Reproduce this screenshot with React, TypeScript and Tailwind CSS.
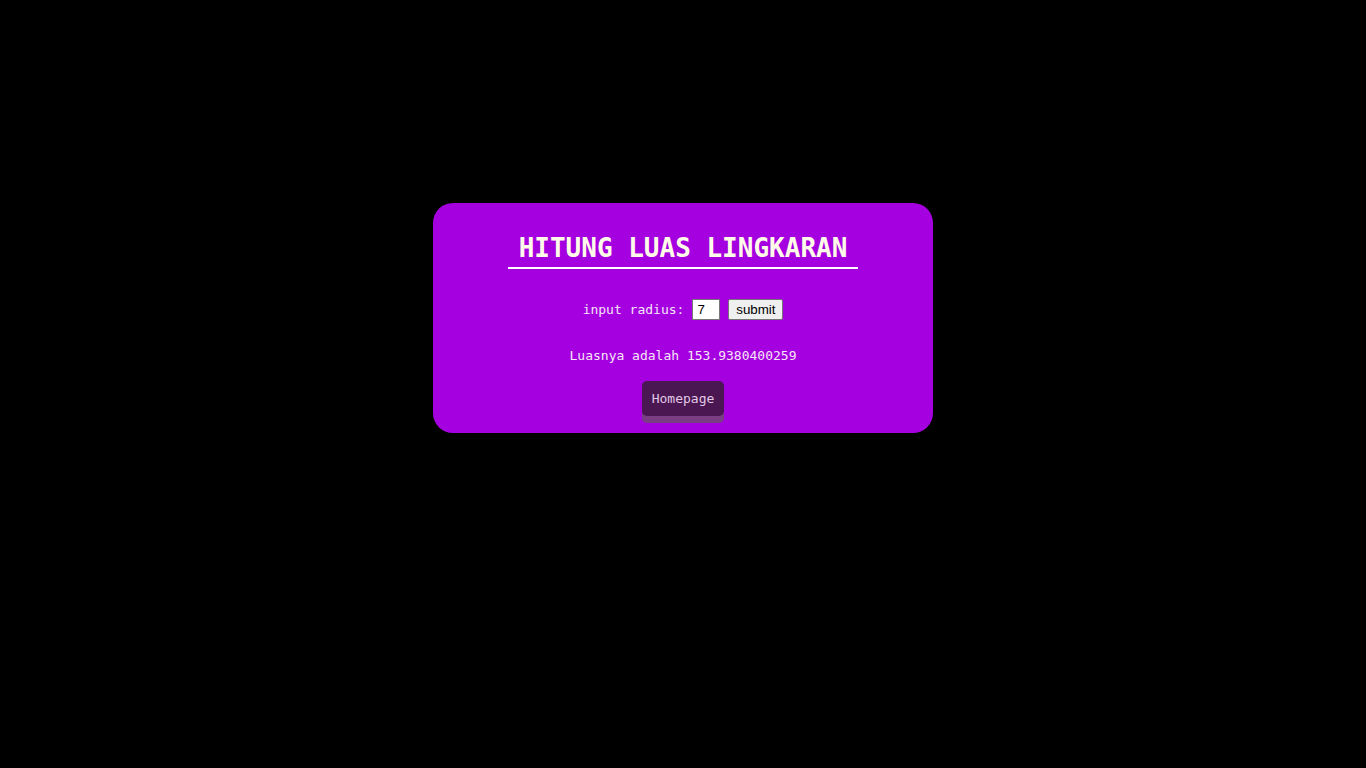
import React from "react";

export default function App() {
  return (
    <div className="min-h-[768px] w-full bg-black pt-[203px]" style={{ fontFamily: '"DejaVu Sans Mono", monospace' }}>
      <div className="mx-auto flex w-[500px] flex-col items-center rounded-[20px] bg-[#a500e0] pt-[30px] pb-[17px]">
        <h1 className="border-b-2 border-white px-[11px] pb-[4px] text-[26px] font-bold leading-[30px] text-[#fffbe8]">
          HITUNG LUAS LINGKARAN
        </h1>
        <div className="mt-[30px] flex items-center text-[13px] text-[#f6e6f6]">
          <span>input radius:</span>
          <input
            defaultValue="7"
            className="ml-[8px] h-[21px] w-[28px] border border-[#767676] bg-white px-[4px] text-[13.33px] text-black"
            style={{ fontFamily: "Arial, 'Liberation Sans', sans-serif" }}
          />
          <button
            className="ml-[8px] h-[21px] w-[55px] rounded-[2px] border border-[#767676] bg-[#efefef] text-[13.33px] text-black"
            style={{ fontFamily: "Arial, 'Liberation Sans', sans-serif" }}
          >
            submit
          </button>
        </div>
        <p className="mt-[28px] text-[13px] leading-[15px] text-[#f6e6f6]">Luasnya adalah 153.9380400259</p>
        <button className="mt-[18px] h-[35px] w-[82px] rounded-[5px] bg-[#4a1752] text-[13px] text-[#e2c9e6] shadow-[0_7px_0_#7a3e85]">
          Homepage
        </button>
      </div>
    </div>
  );
}
